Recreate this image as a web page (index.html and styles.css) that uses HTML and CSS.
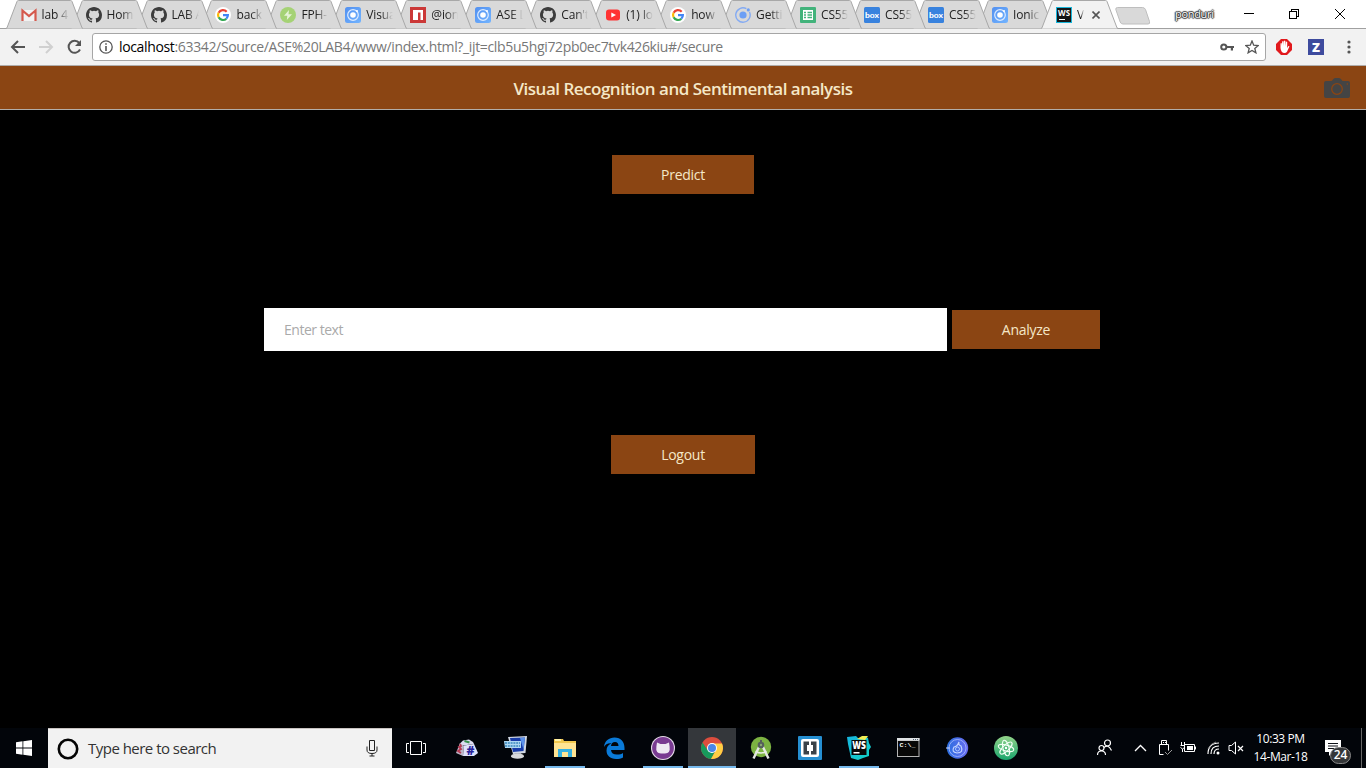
FILE: index.html
```html
<!DOCTYPE html>
<html lang="en">
<head>
<meta charset="utf-8">
<title>Visual Recognition and Sentimental analysis</title>
<link rel="stylesheet" href="styles.css">
</head>
<body>
<svg class="defs" aria-hidden="true">
  <defs>
    <linearGradient id="atomg" x1="0" y1="0" x2="0" y2="1"><stop offset="0" stop-color="#92d48a"/><stop offset="1" stop-color="#1aa56d"/></linearGradient>
    <linearGradient id="iong" x1="0" y1="0" x2="1" y2="0"><stop offset="0" stop-color="#2a6fe0"/><stop offset="1" stop-color="#6a6cf0"/></linearGradient>
    <linearGradient id="wsg" x1="0" y1="0" x2="1" y2="1"><stop offset="0" stop-color="#16b5e0"/><stop offset="1" stop-color="#12d3c5"/></linearGradient>
    <linearGradient id="ionsq" x1="0" y1="0" x2="1" y2="1"><stop offset="0" stop-color="#5290f0"/><stop offset="1" stop-color="#72b4ff"/></linearGradient>
  </defs>
  <symbol id="shape" viewBox="0 0 77 29"><path d="M0 28.500 Q.8 28.500 1.300 27 L11 1.500 Q11.400 .5 12.500 .5 H64.500 Q65.600 .5 66 1.500 L75.700 27 Q76.200 28.500 77 28.500" fill="currentColor" stroke="#a8a8a8"/></symbol>
  <symbol id="gmail" viewBox="0 0 16 16"><path d="M1 3h14v11H1z" fill="#f2f2f2"/><path d="M1.500 14V3.500L8 9l6.500-5.500V14" fill="none" stroke="#d5594d" stroke-width="2.200"/></symbol>
  <symbol id="github" viewBox="0 0 16 16"><path fill="#3c3c3c" d="M8 0C3.580 0 0 3.580 0 8c0 3.540 2.290 6.530 5.470 7.590.4.070.55-.17.55-.38v-1.490c-2.010.37-2.530-.49-2.690-.94-.09-.23-.48-.94-.82-1.130-.28-.15-.68-.52-.01-.53.63-.01 1.080.58 1.230.82.72 1.210 1.870.87 2.330.66.07-.52.28-.87.51-1.070-1.780-.2-3.640-.89-3.640-3.950 0-.87.31-1.590.82-2.150-.08-.2-.36-1.020.08-2.120 0 0 .67-.21 2.200.82a7.400 7.400 0 0 1 4 0c1.530-1.040 2.200-.82 2.200-.82.44 1.100.16 1.920.08 2.120.51.56.82 1.270.82 2.150 0 3.070-1.870 3.750-3.650 3.950.29.25.54.73.54 1.480v2.200c0 .21.15.46.55.38A8 8 0 0 0 16 8c0-4.420-3.580-8-8-8z"/></symbol>
  <symbol id="google" viewBox="0 0 16 16"><circle cx="8" cy="8" r="8" fill="#fff"/><g fill="none" stroke-width="2.200"><path d="M11.700 4.700A5 5 0 0 0 3.600 5.700" stroke="#ea4335"/><path d="M3.600 5.700a5 5 0 0 0 0 4.600" stroke="#fbbc05"/><path d="M3.600 10.300a5 5 0 0 0 7.700 1.500" stroke="#34a853"/><path d="M11.300 11.800A5 5 0 0 0 12.900 8.100H8" stroke="#4285f4"/></g></symbol>
  <symbol id="bolt" viewBox="0 0 16 16"><circle cx="8" cy="8" r="8" fill="#a5d275"/><path d="M9 3L4 8.700h3.300L6.800 13 12 7.300H8.500z" fill="#e6f3d8"/></symbol>
  <symbol id="ionic" viewBox="0 0 16 16"><rect width="16" height="16" rx="2.500" fill="url(#ionsq)"/><circle cx="8" cy="8" r="5.300" fill="none" stroke="#dcebff" stroke-width="1.200"/><circle cx="8" cy="8" r="2.800" fill="#fff"/><circle cx="12" cy="4" r="1" fill="#fff"/></symbol>
  <symbol id="ionicring" viewBox="0 0 16 16"><path d="M11.400 1.700A7.200 7.200 0 1 0 14.500 5" fill="none" stroke="#83aaf3" stroke-width="1.400"/><circle cx="8" cy="8" r="3.600" fill="#6c9ff5"/><circle cx="13.300" cy="2.900" r="1.600" fill="#6c9ff5"/></symbol>
  <symbol id="npm" viewBox="0 0 16 16"><path fill="#cb3837" d="M0 0h16v16H0z"/><path fill="#fff" d="M3 3h10v10h-2.500V5.500H8V13H3z"/></symbol>
  <symbol id="youtube" viewBox="0 0 16 16"><rect x="1" y="2.500" width="14" height="11" rx="3" fill="#f33"/><path d="M6.300 5.500v5L11 8z" fill="#fff"/></symbol>
  <symbol id="sheet" viewBox="0 0 16 16"><rect width="16" height="16" rx="1" fill="#42b37b"/><path fill="#fff" d="M3 3h10v10H3z"/><path d="M4 5.500h2M7.500 5.500h4.500M4 8h2M7.500 8h4.500M4 10.500h2M7.500 10.500h4.500" stroke="#42b37b" stroke-width="1.300"/></symbol>
</svg>

<header class="browser">
  <div class="tabstrip">
    <div class="tab z16"><svg class="tabshape"><use href="#shape"/></svg><svg class="fav"><use href="#gmail"/></svg><span class="label">lab 4</span></div>
    <div class="tab z15"><svg class="tabshape"><use href="#shape"/></svg><svg class="fav"><use href="#github"/></svg><span class="label">Home</span></div>
    <div class="tab z14"><svg class="tabshape"><use href="#shape"/></svg><svg class="fav"><use href="#github"/></svg><span class="label">LAB A</span></div>
    <div class="tab z13"><svg class="tabshape"><use href="#shape"/></svg><svg class="fav"><use href="#google"/></svg><span class="label">back</span></div>
    <div class="tab z12"><svg class="tabshape"><use href="#shape"/></svg><svg class="fav"><use href="#bolt"/></svg><span class="label">FPH-</span></div>
    <div class="tab z11"><svg class="tabshape"><use href="#shape"/></svg><svg class="fav"><use href="#ionic"/></svg><span class="label">Visual</span></div>
    <div class="tab z10"><svg class="tabshape"><use href="#shape"/></svg><svg class="fav"><use href="#npm"/></svg><span class="label">@ion</span></div>
    <div class="tab z9"><svg class="tabshape"><use href="#shape"/></svg><svg class="fav"><use href="#ionic"/></svg><span class="label">ASE L</span></div>
    <div class="tab z8"><svg class="tabshape"><use href="#shape"/></svg><svg class="fav"><use href="#github"/></svg><span class="label">Can't</span></div>
    <div class="tab z7"><svg class="tabshape"><use href="#shape"/></svg><svg class="fav"><use href="#youtube"/></svg><span class="label">(1) Io</span></div>
    <div class="tab z6"><svg class="tabshape"><use href="#shape"/></svg><svg class="fav"><use href="#google"/></svg><span class="label">how</span></div>
    <div class="tab z5"><svg class="tabshape"><use href="#shape"/></svg><svg class="fav"><use href="#ionicring"/></svg><span class="label">Getti</span></div>
    <div class="tab tight z4"><svg class="tabshape"><use href="#shape"/></svg><svg class="fav"><use href="#sheet"/></svg><span class="label">CS55</span></div>
    <div class="tab tight z3"><svg class="tabshape"><use href="#shape"/></svg><svg class="fav" viewBox="0 0 16 16"><rect width="16" height="16" rx="1.500" fill="#3882de"/><text x="8" y="11.200" text-anchor="middle" textLength="14" lengthAdjust="spacingAndGlyphs" class="boxlogo">box</text></svg><span class="label">CS55</span></div>
    <div class="tab tight z2"><svg class="tabshape"><use href="#shape"/></svg><svg class="fav" viewBox="0 0 16 16"><rect width="16" height="16" rx="1.500" fill="#3882de"/><text x="8" y="11.200" text-anchor="middle" textLength="14" lengthAdjust="spacingAndGlyphs" class="boxlogo">box</text></svg><span class="label">CS55</span></div>
    <div class="tab tight z1"><svg class="tabshape"><use href="#shape"/></svg><svg class="fav"><use href="#ionic"/></svg><span class="label">Ionic</span></div>
    <div class="tab active"><svg class="tabshape"><use href="#shape"/></svg><svg class="fav" viewBox="0 0 16 16"><path fill="#18b6da" d="M0 0h16v16H0z"/><path fill="#151515" d="M1 1h14v14H1z"/><text x="2" y="8.600" textLength="12" lengthAdjust="spacingAndGlyphs" class="wslogo">WS</text><path fill="#fff" d="M3 12h6v1H3z"/></svg><span class="label short">V</span><svg class="close" viewBox="0 0 8 8"><path d="M.5.5l7 7M7.500.5l-7 7" stroke="#555" stroke-width="1.600"/></svg></div>
    <svg class="newtab" viewBox="0 0 36 18"><path d="M2.500.5h25q2 0 3 2l4 12q.8 2.500-1.500 2.500H8q-2 0-2.800-2L.8 2.500Q.5.5 2.500.5z" fill="#d9d9d9" stroke="#bebebe"/></svg>
    <span class="profile">ponduri</span>
    <svg class="winctl" viewBox="0 0 112 12" shape-rendering="crispEdges"><g fill="none" stroke="#000"><path d="M0 5.500h10M45.500 3.500h7v7h-7zM47.500 3.500v-2h7v7h-2"/><path d="M91 1l10 10M101 1L91 11" shape-rendering="auto"/></g></svg>
  </div>
  <div class="toolbar">
    <svg class="nav" viewBox="0 0 76 18"><g fill="none" stroke-width="2"><path d="M15 9H2M8 3L2 9l6 6" stroke="#555"/><path d="M29 9h12M36 3l6 6-6 6" stroke="#d0d0d0"/><path d="M69.300 5A6 6 0 1 0 70 11.500" stroke="#555"/></g><path d="M71 2v6h-6z" fill="#555"/></svg>
    <div class="omnibox">
      <svg class="info" viewBox="0 0 14 14"><circle cx="7" cy="7" r="6.200" fill="none" stroke="#555" stroke-width="1.300"/><path d="M6.200 3.200h1.600v1.600H6.200zM6.200 6h1.600v5H6.200z" fill="#555"/></svg>
      <span class="url"><b>localhost</b>:63342/Source/ASE%20LAB4/www/index.html?_ijt=clb5u5hgi72pb0ec7tvk426kiu#/secure</span>
      <svg class="key" viewBox="0 0 14 8"><circle cx="3.800" cy="4" r="2.600" fill="none" stroke="#555" stroke-width="2"/><path d="M6 3h8v2h-1v2.500h-2.200V5H6z" fill="#555"/></svg>
      <svg class="star" viewBox="0 0 14 14"><path d="M7 1l1.700 4.200 4.600.3-3.500 2.900 1.100 4.400L7 10.400l-3.900 2.400 1.100-4.400L.7 5.500l4.600-.3z" fill="none" stroke="#555" stroke-width="1.300"/></svg>
    </div>
    <svg class="ext" viewBox="0 0 16 16"><path d="M5 0h6l5 5v6l-5 5H5l-5-5V5z" fill="#e1191d"/><path d="M4.500 9V4.500q.8-1 1.300 0V7l.4-4.500q.8-1 1.400 0V7l.4-5q.8-.8 1.400 0V7l.5-4q.7-.8 1.300 0v6l1.200-2q1-.3 1 .5l-2.400 5.300Q10 14 8.500 14 5 14 4.500 9z" fill="#fff"/></svg>
    <svg class="ext zext" viewBox="0 0 16 16"><path fill="#3e4b9e" d="M0 0h16v16H0z"/><text x="8" y="12.600" text-anchor="middle" class="zlogo">Z</text></svg>
    <svg class="menu" viewBox="0 0 4 14" fill="#555"><circle cx="2" cy="2" r="1.600"/><circle cx="2" cy="7" r="1.600"/><circle cx="2" cy="12" r="1.600"/></svg>
  </div>
</header>

<div class="appbar">
  <h1>Visual Recognition and Sentimental analysis</h1>
  <svg class="camera" viewBox="0 0 26 20"><path d="M2 3h5q1 0 2-1.500T11 0h4q1.500 0 2.300 1.500T19.300 3H24q2 0 2 2v13q0 2-2 2H2q-2 0-2-2V5q0-2 2-2z" fill="#444"/><circle cx="13" cy="11" r="5.300" fill="none" stroke="#8b4513" stroke-width="1.300"/><circle cx="23.300" cy="6" r=".8" fill="#8b4513"/></svg>
</div>

<main class="content">
  <button class="btn predict">Predict</button>
  <form class="analyze">
    <input class="field" type="text" placeholder="Enter text">
    <button class="btn analyzebtn" type="button">Analyze</button>
  </form>
  <button class="btn logout">Logout</button>
</main>

<footer class="taskbar">
  <div class="start"><svg width="16" height="16" viewBox="0 0 16 16" fill="#fff"><path d="M0 2.200l6.500-.9v6.200H0zM7.300 1.200L16 0v7.500H7.300zM0 8.400h6.500v6.300L0 13.800zM7.300 8.400H16V16l-8.700-1.200z"/></svg></div>
  <div class="search">
    <svg class="cortana" viewBox="0 0 22 22"><circle cx="11" cy="11" r="9.200" fill="none" stroke="#050505" stroke-width="2.600"/></svg>
    <span>Type here to search</span>
    <svg class="mic" viewBox="0 0 12 17" fill="none" stroke="#222"><path d="M3.500.5h5v10h-5zM1 6.500v3.500q0 3.500 5 3.500t5-3.500V6.500M6 13.500V16M3.500 16h5"/></svg>
  </div>
  <div class="taskview"><svg width="20" height="14" viewBox="0 0 20 14" fill="none" stroke="#fff"><path d="M4.500.5h11v13h-11zM3 2.500H.5v9H3M17 2.500h2.500v9H17"/></svg></div>
  <div class="apps">
    <div class="app"><svg viewBox="0 0 24 24"><path d="M8 4.500l6-1 4 2.500 1 2-11 1.500-4-1z" fill="#dcdcf0"/><path d="M5 7l4 3-1 10-7-3z" fill="#bcb6c8"/><path d="M9 9.500L19 8l4 9-4 3H8z" fill="#dfe2fb"/><path d="M5 8l1 2-2 1 2 2-3 2 3 2" stroke="#b53850" stroke-width="1.800" fill="none"/><path d="M9.500 5l5 1.500" stroke="#38914e" stroke-width="2.200"/><text x="11.500" y="18.500" class="hash">#</text></svg></div>
    <div class="app"><svg viewBox="0 0 24 24"><path d="M4 1l19-1-1.500 17L9 18z" fill="#d2d9e4"/><path d="M6 2l15-.5-1.500 13.500L9 16z" fill="#173ba8"/><path d="M16 2l5-.5-1.500 12z" fill="#5c93ec"/><path d="M0 5h17v7H1z" fill="#afd8f2"/><path d="M1 7h15M1 10h15" stroke="#3986bd" stroke-width="1.500" stroke-dasharray="2 .8"/><path d="M12 17h5l1 3h-7z" fill="#a8adb2"/><ellipse cx="13.500" cy="20.200" rx="6.500" ry="2.600" fill="#d7d9db"/></svg></div>
    <div class="app open"><svg viewBox="0 0 24 24"><path d="M1 3h9l1 2h12v15H1z" fill="#f1c84f"/><path d="M1 7h22v14H1z" fill="#ffe493"/><path d="M2 4h6" stroke="#fff2a8" stroke-width="2"/><path d="M5 13h14v8h-4v-5H9v5H5z" fill="#36b1e2"/></svg></div>
    <div class="app"><svg viewBox="0 0 24 24"><path d="M2 11C2.500 5 7 1.500 12.500 1.500 19 1.500 22.500 6 22.500 12v2H9c.2 3 2.500 4.600 6 4.600 2.700 0 4.600-.7 6-1.600v4.400c-2 1.100-4.100 1.600-7 1.600-6 0-9.500-3.600-9.500-8.500 0-3.300 2-6 5-7.200C5.500 7 3.300 8.600 2 11zm7-.9h7.500c-.1-2.500-1.200-4-3.500-4s-3.700 1.500-4 4z" fill="#0a7ad8"/></svg></div>
    <div class="app open"><svg viewBox="0 0 24 24"><circle cx="12" cy="12" r="12" fill="#e5dce8"/><circle cx="12" cy="12" r="10.900" fill="#793b91"/><path d="M6 6.500L9.500 8h5L18 6.500l.6 4q1 7-4.600 7h-4q-5.600 0-4.600-7z" fill="#eee9f2"/></svg></div>
    <div class="app open current"><svg viewBox="0 0 24 24"><circle cx="12" cy="12" r="11" fill="#dc4d3e"/><path d="M2.500 6.500A11 11 0 0 0 11 23l5-9-8.500 0z" fill="#179a5c"/><path d="M11 23A11 11 0 0 0 22 7.500H12l5 4.500z" fill="#ffce44"/><circle cx="12" cy="12" r="5" fill="#fff"/><circle cx="12" cy="12" r="4" fill="#4a86e8"/></svg></div>
    <div class="app"><svg viewBox="0 0 24 24"><circle cx="12" cy="11" r="10.200" fill="#7cb342"/><path d="M12 4v4" stroke="#555f5b" stroke-width="2"/><path d="M10.500 10L4.500 22.500M13.500 10l6 12.500" stroke="#e4e6e4" stroke-width="2.400"/><circle cx="12" cy="9" r="3.300" fill="#555f5b"/><circle cx="12" cy="9" r="1.200" fill="#8ba774"/><path d="M6.500 15.500q5.500 3 11 0" stroke="#e8eee2" stroke-width="1.500" fill="none"/></svg></div>
    <div class="app"><svg viewBox="0 0 24 24"><rect width="24" height="24" rx="1" fill="#258fd2"/><rect x="3" y="3" width="18" height="18" rx="2" fill="#fff"/><path d="M11 5.500H5.500v13H11V15H9V9h2zM13 5.500h5.500v13H13V15h2V9h-2z" fill="#3a4249"/></svg></div>
    <div class="app open"><svg viewBox="0 0 24 24"><path d="M0 1l9-1 3 3 5-3 4 2 1 5 2 4-2 3v6l-6 2-5 2-7-2L1 8z" fill="url(#wsg)"/><path d="M10 3l5-3 6 0-3 4z" fill="#f1ee54"/><path d="M4.500 4h15v15h-15z" fill="#080808"/><text x="5.200" y="12.800" textLength="13.800" lengthAdjust="spacingAndGlyphs" class="wsbig">WS</text><path fill="#fff" d="M6.500 16h6v1.500h-6z"/></svg></div>
    <div class="app"><svg viewBox="0 0 24 24"><path d="M1 2h22.500v19H1z" fill="#b5b5b5"/><path d="M1 2h22.500v2.500H1z" fill="#dfe3e6"/><path d="M2 5h20.500v15H2z" fill="#080808"/><path d="M17 3.500h5" stroke="#526273" stroke-dasharray="1 1"/><text x="3.500" y="11" textLength="16" lengthAdjust="spacingAndGlyphs" class="prompt">C:\_</text></svg></div>
    <div class="app"><svg viewBox="0 0 24 24"><circle cx="12.500" cy="12" r="10.700" fill="url(#iong)"/><circle cx="12.500" cy="12" r="8.500" fill="none" stroke="#a8baff" stroke-width=".8"/><path d="M14 6q-1 3 2 4 3 7-4 7-6-1-3-6 3 0 5-5zM1 12h4" fill="none" stroke="#c5d5ff" stroke-width="1.200"/><circle cx="12.500" cy="13" r="2" fill="none" stroke="#acc8ff"/></svg></div>
    <div class="app"><svg viewBox="0 0 24 24"><circle cx="12" cy="12" r="12" fill="url(#atomg)"/><g fill="none" stroke="#f2fff5" stroke-width="1.100"><ellipse cx="12" cy="12" rx="8" ry="3" transform="rotate(15 12 12)"/><ellipse cx="12" cy="12" rx="8" ry="3" transform="rotate(75 12 12)"/><ellipse cx="12" cy="12" rx="8" ry="3" transform="rotate(135 12 12)"/></g><circle cx="12" cy="12" r="1.200" fill="#fff"/></svg></div>
  </div>
  <div class="tray">
    <svg width="140" height="18" viewBox="0 0 140 18" fill="none" stroke="#fff"><g stroke-width="1.200"><circle cx="10.500" cy="4" r="3"/><circle cx="4.500" cy="9" r="2.500"/><path d="M.5 16q0-4 4-4t4 4M7 8.500q4-4 7.500 3"/></g><path d="M38 12l5.500-5.500L49 12" stroke-width="1.300"/><path d="M64.500 1.500h5v4h-5zM62.500 5.500h9v6M62.500 5.500v10h4M66.500 3v1M68.500 3v1"/><path d="M68 13l2.500 2.500L75 11" stroke="#999"/><path d="M87.500 5.500h10v7h-10zM98.500 7.500v3M84.500 3v3M87.500 3v3M83.500 6.500h4v2l-2 1.500-2-1.500M85.500 10v3"/><path d="M90 7h6v4h-6z" fill="#fff" stroke="none"/><path d="M111 15Q111 4 122 4M114 15q0-8 8-8M117 15q0-5 5-5" stroke-width="1.200"/><path d="M111 10Q114 4 119 3" stroke="#888"/><circle cx="121" cy="14" r="1.500" fill="#fff" stroke="none"/><path d="M132 6.500h2.500l4-3.500v12l-4-3.500H132z"/></svg>
    <svg class="mute" width="7" height="18" viewBox="0 0 7 18"><path d="M1 7l5 5M6 7l-5 5" stroke="#fff" stroke-width="1.200"/></svg>
    <div class="clock"><span>10:33 PM</span><span>14-Mar-18</span></div>
    <div class="notice"><svg width="16" height="16" viewBox="0 0 16 16"><path d="M0 0h16v12H8l-4 4v-4H0z" fill="#fff"/><path d="M3 3.500h10M3 6h10M3 8.500h6" stroke="#10131a"/></svg><span class="count">24</span></div>
    <div class="peek"></div>
  </div>
</footer>
</body>
</html>
```
FILE: styles.css
```css
* { box-sizing: border-box; }
body { margin: 0; width: 1366px; height: 768px; overflow: hidden; display: flex; flex-direction: column; background: #000; font-family: "Open Sans", "Noto Sans", sans-serif; }
svg { display: block; flex: none; }
.defs { position: absolute; width: 0; height: 0; }
.browser { background: #f2f2f2; flex: none; }
.tabstrip { display: flex; height: 29px; padding-left: 5.600px; background: linear-gradient(#fff 28px, #a0a0a0 28px); }
.tab { position: relative; flex: none; display: flex; width: 77px; height: 29px; padding: 7px 0 0 15px; margin-right: -12.050px; color: #d9d9d9; }
.tight { margin-right: -13px; }
.tabshape { position: absolute; left: 0; top: 0; width: 77px; height: 29px; z-index: 0; }
.fav { position: relative; width: 16px; height: 16px; }
.label { position: relative; width: 27px; margin-left: 5px; overflow: hidden; white-space: nowrap; font-size: 12px; letter-spacing: -.15px; line-height: 16px; color: #222; -webkit-mask-image: linear-gradient(90deg, #000 55%, transparent); mask-image: linear-gradient(90deg, #000 55%, transparent); }
.short { width: 7px; }
.active { z-index: 20; color: #f2f2f2; margin-right: -12.050px; }
.close { position: relative; width: 8px; height: 8px; margin: 4px 0 0 7.500px; }
.z16 { z-index: 16; } .z15 { z-index: 15; } .z14 { z-index: 14; } .z13 { z-index: 13; }
.z12 { z-index: 12; } .z11 { z-index: 11; } .z10 { z-index: 10; } .z9 { z-index: 9; }
.z8 { z-index: 8; } .z7 { z-index: 7; } .z6 { z-index: 6; } .z5 { z-index: 5; }
.z4 { z-index: 4; } .z3 { z-index: 3; } .z2 { z-index: 2; } .z1 { z-index: 1; }
.newtab { width: 36px; height: 18px; margin: 7px 0 0 9px; }
.profile { width: 40px; margin: 6px 0 0 24px; font-size: 11px; letter-spacing: -.3px; line-height: 16px; color: #fff; text-shadow: 0 0 1px #222, 1px 0 1px #333, -1px 0 1px #333, 0 1px 1px #333, 0 -1px 1px #333; }
.winctl { width: 112px; height: 12px; margin: 8px 0 0 29px; }
.toolbar { display: flex; align-items: center; height: 37px; border-bottom: 1px solid #b0adab; }
.nav { width: 76px; height: 18px; margin-left: 10px; }
.omnibox { display: flex; align-items: center; width: 1174px; height: 28px; margin-left: 6px; padding-left: 6px; border: 1px solid #a6a6a6; border-radius: 3px; background: #fff; }
.info { width: 14px; height: 14px; }
.url { width: 1095px; margin-left: 6px; font-size: 14px; line-height: 20px; letter-spacing: -.35px; color: #777; white-space: nowrap; }
.url b { font-weight: 400; color: #000; }
.key { width: 14px; height: 8px; margin-left: 6px; }
.star { width: 14px; height: 14px; margin-left: 11px; }
.ext { width: 16px; height: 16px; margin-left: 10px; }
.zext { margin-left: 16px; }
.menu { width: 4px; height: 14px; margin-left: 23px; }
.boxlogo { font: 900 8px Lato, sans-serif; fill: #fff; }
.wslogo { font: 700 8.500px "Open Sans", sans-serif; fill: #fff; }
.zlogo { font: 800 13px "Open Sans", sans-serif; fill: #fff; }
.wsbig { font: 800 10px "Open Sans", sans-serif; fill: #fff; }
.hash { font: 800 12px "Open Sans", sans-serif; fill: #27239a; }
.prompt { font: 700 6px "Liberation Mono", monospace; fill: #fff; }
.appbar { position: relative; flex: none; display: flex; justify-content: center; height: 44px; border-bottom: 1px solid #b2ada8; background: #8b4513; }
.appbar h1 { margin: 0; font-size: 17px; font-weight: 600; line-height: 45px; letter-spacing: -.49px; color: #f5e8c8; white-space: nowrap; }
.camera { position: absolute; right: 16px; top: 12px; width: 26px; height: 20px; }
.content { flex: 1; display: flex; flex-direction: column; align-items: center; padding-top: 45px; }
.btn { height: 39px; padding: 0; border: 0; background: #8b4513; color: #f5e8c8; font: 14px/39px "Open Sans", sans-serif; letter-spacing: -.27px; }
.predict { width: 142px; }
.analyze { display: flex; align-items: center; gap: 5px; margin: 114px 2px 84px 0; }
.field { width: 683px; height: 43px; padding: 0 20px; border: 0; background: #fff; font: 14px "Open Sans", sans-serif; letter-spacing: -.48px; }
.field::placeholder { color: #aaa; opacity: 1; }
.analyzebtn { width: 148px; }
.logout { width: 144px; }
.taskbar { flex: none; display: flex; height: 40px; background: #02050a; color: #fff; }
.start, .taskview { display: flex; align-items: center; justify-content: center; width: 48px; flex: none; }
.search { display: flex; align-items: center; width: 344px; border-top: 1px solid #c9c3c1; background: #f2f2f2; color: #333; font-size: 15px; letter-spacing: -.52px; flex: none; }
.cortana { width: 22px; height: 22px; margin-left: 9px; }
.search span { width: 270px; margin-left: 9px; line-height: 20px; padding-bottom: 1px; }
.mic { width: 12px; height: 17px; margin-left: 8px; }
.apps { display: flex; gap: 1px; margin-left: 3px; }
.app { position: relative; display: flex; width: 48px; align-items: center; justify-content: center; }
.app svg { width: 24px; height: 24px; }
.open::after { content: ""; position: absolute; left: 4px; right: 4px; bottom: 0; height: 2px; background: #76b9ed; }
.current { background: #34373b; }
.current::after { left: 0; right: 0; }
.tray { display: flex; align-items: center; margin-left: 66.500px; }
.mute { margin-left: 0; }
.clock { display: flex; flex-direction: column; align-items: center; width: 56px; margin-left: 9px; font-size: 12px; line-height: 18px; letter-spacing: -.4px; white-space: nowrap; }
.notice { position: relative; margin-left: 16.500px; }
.count { position: absolute; left: 5px; top: 7px; width: 21px; height: 17px; border: 1px solid #888; border-radius: 9px; background: #343638; font-size: 12px; font-weight: 600; line-height: 14px; text-align: center; }
.peek { width: 1px; height: 40px; margin-left: 20px; background: #666; }
```
